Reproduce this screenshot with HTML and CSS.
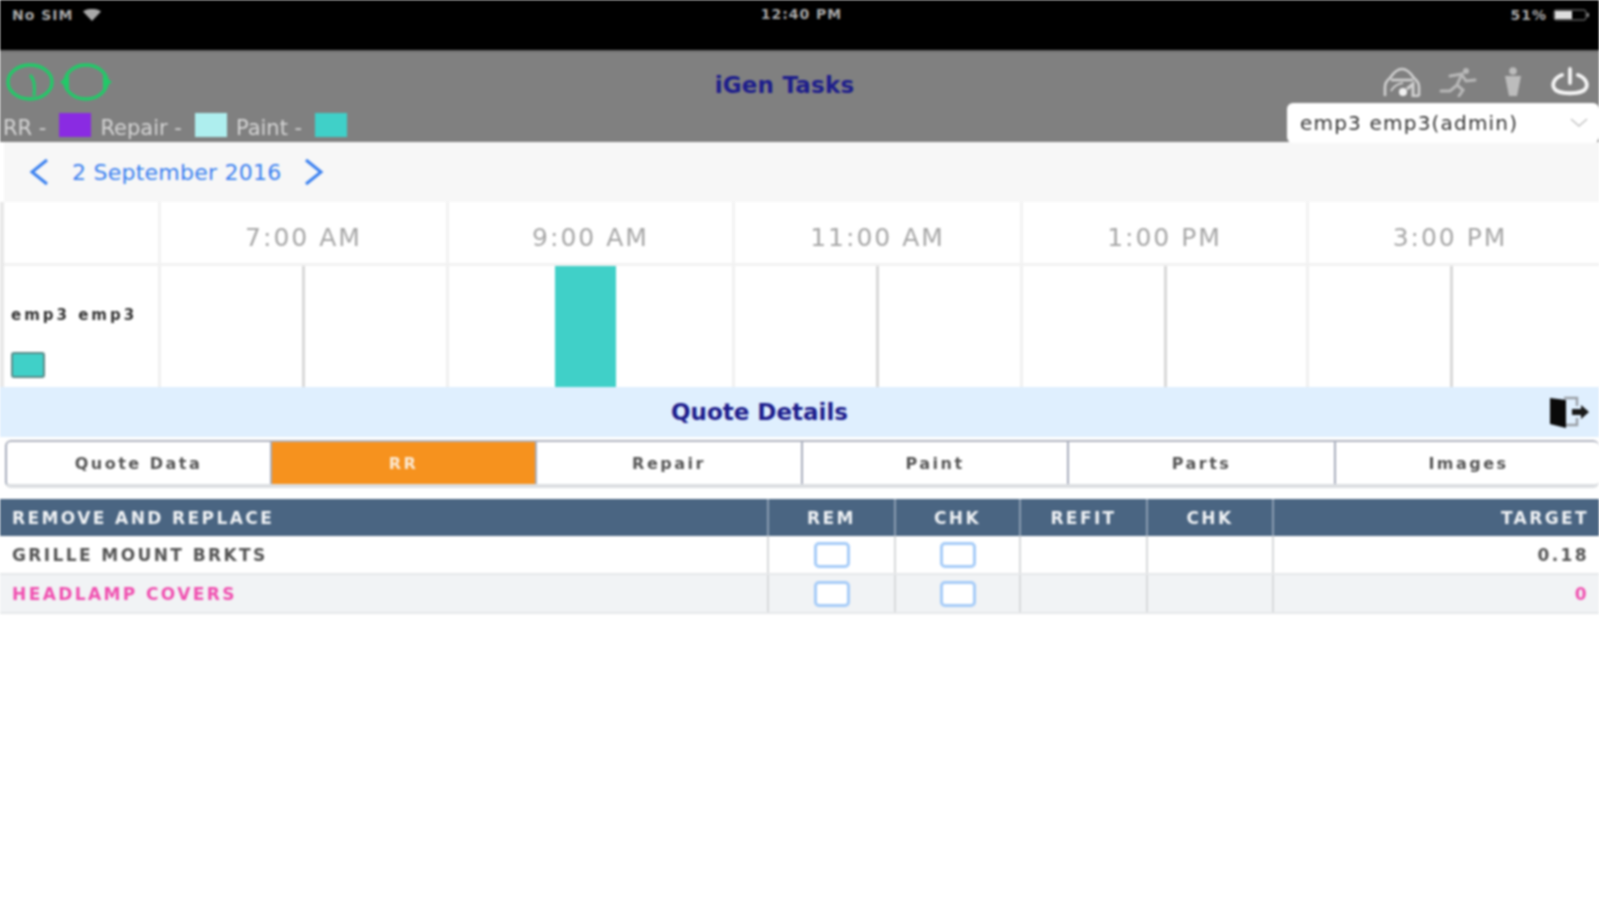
FILE: index.html
```html
<!DOCTYPE html>
<html lang="en">
<head>
    <meta charset="UTF-8">
    <meta name="viewport" content="width=device-width, initial-scale=1.0">
    <title>iGen Tasks</title>
    <link rel="stylesheet" href="styles.css">
</head>
<body>
    <div class="screen">
        <!-- Status bar -->
        <div class="status-bar">
            <div class="status-side">
                <span>No SIM</span>
                <svg class="wifi" width="18" height="12" viewBox="0 0 18 12"><path d="M0 2.5 C5 -1 13 -1 18 2.5 L9 12 Z" fill="#a8a8a8"/></svg>
            </div>
            <span class="status-time">12:40 PM</span>
            <div class="status-side right">
                <span>51%</span>
                <svg width="38" height="12" viewBox="0 0 38 12"><rect x="1" y="1" width="32" height="10" rx="2" fill="none" stroke="#888" stroke-width="1"/><rect x="2" y="2" width="17" height="8" fill="#ddd"/><rect x="34" y="4" width="2" height="4" fill="#888"/></svg>
            </div>
        </div>

        <!-- Header -->
        <header class="app-header">
            <div class="header-main">
                <div class="header-icons">
                    <svg width="50" height="40" viewBox="0 0 50 40"><ellipse cx="24" cy="20" rx="22" ry="17" fill="none" stroke="#22c968" stroke-width="3.4"/><path d="M24 13 Q30 18 28 34" fill="none" stroke="#22c968" stroke-width="3"/></svg>
                    <svg width="52" height="40" viewBox="0 0 52 40"><ellipse cx="26" cy="20" rx="21" ry="17" fill="none" stroke="#22c968" stroke-width="3.4"/><path d="M0 20 L9 13 L9 27 Z M52 20 L43 13 L43 27 Z" fill="#22c968"/></svg>
                </div>
                <h1 class="app-title">iGen Tasks</h1>
                <div class="header-actions">
                    <svg width="38" height="30" viewBox="0 0 38 30" fill="none" stroke="#d0d0d0" stroke-width="2.6"><path d="M2 29 V20 Q2 15 7 11 Q13 2 19 2 Q25 2 31 11 Q36 15 36 20 V29"/><path d="M8 13 H30"/><path d="M8 24 Q12 17 20 16" stroke-width="2"/><circle cx="20" cy="25" r="4" fill="#f2f2f2" stroke="none"/><path d="M24 22 L30 17 V29 H36" stroke-width="3"/></svg>
                    <svg class="icon-runner" width="38" height="30" viewBox="0 0 38 30" fill="none" stroke="#b8b8b8" stroke-width="3" stroke-linecap="round"><circle cx="27" cy="4" r="3" fill="#b8b8b8" stroke="none"/><path d="M11 9 L23 7 L18 18 L24 23 L20 29"/><path d="M23 8 L27 14 L36 13"/><path d="M17 19 L11 24 H2"/></svg>
                    <svg class="icon-person" width="22" height="30" viewBox="0 0 22 30" fill="#bcbcbc"><circle cx="11" cy="4" r="3.8"/><path d="M3 9 H19 L17 19 L15 29 H7 L5 19 Z"/></svg>
                    <svg class="icon-power" width="38" height="30" viewBox="0 0 38 30" fill="none" stroke="#f4f4f4" stroke-width="3.8" stroke-linecap="round"><path d="M11 8 C3 11 1 17 3 21 C6 28 32 28 35 21 C37 17 35 11 27 8"/><path d="M19 2 V16"/></svg>
                </div>
            </div>
            <div class="header-sub">
                <div class="legend">
                    <span>RR -</span><i class="swatch swatch-rr"></i>
                    <span>Repair -</span><i class="swatch swatch-repair"></i>
                    <span>Paint -</span><i class="swatch swatch-paint"></i>
                </div>
                <div class="employee-select">
                    <span>emp3 emp3(admin)</span>
                    <svg width="20" height="10" viewBox="0 0 20 10"><path d="M2 1 L10 8 L18 1" fill="none" stroke="#c4c4c4" stroke-width="1.6"/></svg>
                </div>
            </div>
        </header>

        <!-- Date navigation -->
        <div class="date-bar">
            <svg width="22" height="28" viewBox="0 0 22 28"><path d="M19 2 L4 14 L19 26" fill="none" stroke="#3a80f0" stroke-width="3"/></svg>
            <span class="date-label">2 September 2016</span>
            <svg width="22" height="28" viewBox="0 0 22 28"><path d="M3 2 L18 14 L3 26" fill="none" stroke="#3a80f0" stroke-width="3"/></svg>
        </div>

        <!-- Timeline -->
        <div class="timeline">
            <div class="hour-head first"></div>
            <div class="hour-head">7:00 AM</div>
            <div class="hour-head">9:00 AM</div>
            <div class="hour-head">11:00 AM</div>
            <div class="hour-head">1:00 PM</div>
            <div class="hour-head last">3:00 PM</div>

            <div class="emp-cell">
                <span class="emp-name">emp3 emp3</span>
                <i class="emp-swatch"></i>
            </div>
            <div class="hour-cell"></div>
            <div class="hour-cell"><i class="job-bar"></i></div>
            <div class="hour-cell"></div>
            <div class="hour-cell"></div>
            <div class="hour-cell"></div>
        </div>

        <!-- Quote details -->
        <div class="quote-bar">
            <h2>Quote Details</h2>
            <svg class="exit-icon" width="42" height="34" viewBox="0 0 42 34"><path d="M16 3 H29 V11 M29 23 V30 H16" fill="none" stroke="#9a9fa6" stroke-width="2.4"/><path d="M2 3 L18 5 V33 L2 29 Z" fill="#0a0a0a"/><path d="M24 14 H33 V10 L41 17 L33 24 V20 H24 Z" fill="#1a1a1a"/></svg>
        </div>

        <div class="tabs">
            <div class="tab">Quote Data</div>
            <div class="tab active">RR</div>
            <div class="tab">Repair</div>
            <div class="tab">Paint</div>
            <div class="tab">Parts</div>
            <div class="tab">Images</div>
        </div>

        <div class="rr-table">
            <div class="row head">
                <div class="cell name">REMOVE AND REPLACE</div>
                <div class="cell">REM</div>
                <div class="cell">CHK</div>
                <div class="cell">REFIT</div>
                <div class="cell">CHK</div>
                <div class="cell target">TARGET</div>
            </div>
            <div class="row">
                <div class="cell name">GRILLE MOUNT BRKTS</div>
                <div class="cell"><i class="check"></i></div>
                <div class="cell"><i class="check"></i></div>
                <div class="cell"></div>
                <div class="cell"></div>
                <div class="cell target">0.18</div>
            </div>
            <div class="row alt pink">
                <div class="cell name">HEADLAMP COVERS</div>
                <div class="cell"><i class="check"></i></div>
                <div class="cell"><i class="check"></i></div>
                <div class="cell"></div>
                <div class="cell"></div>
                <div class="cell target">0</div>
            </div>
        </div>
    </div>
</body>
</html>
```

FILE: styles.css
```css
html, body {
    margin: 0;
    height: 100%;
    overflow: hidden;
    background-color: white;
}

/* the reference is a soft upscaled shot, so everything gets a small blur */
.screen {
    width: 1599px;
    height: 900px;
    font-family: "DejaVu Sans", sans-serif;
    filter: blur(1px);
}

.status-bar {
    height: 50px;
    box-sizing: border-box;
    padding: 6px 8px 0 12px;
    background-color: black;
    color: #a8a8a8;
    font-size: 14px;
    font-weight: bold;
    letter-spacing: 1px;
    display: grid;
    grid-template-columns: 1fr auto 1fr;
}

.status-side {
    display: flex;
    align-items: center;
    gap: 10px;
    height: 17px;
}

.status-side.right {
    justify-content: flex-end;
    gap: 6px;
}

.status-time {
    height: 17px;
    line-height: 17px;
}

.app-header {
    height: 92px;
    background-color: #808080;
    border-top: 2px solid #6c6c6c;
    box-sizing: border-box;
}

.header-main {
    height: 51px;
    display: grid;
    grid-template-columns: 1fr auto 1fr;
    align-items: end;
    padding: 0 10px 0 6px;
}

.header-icons {
    display: flex;
    gap: 4px;
    margin-bottom: 1px;
}

.app-title {
    margin: 0 0 5px 0;
    padding-right: 26px;
    color: #1d1d8c;
    font-size: 23px;
    font-weight: bold;
    letter-spacing: 0.2px;
}

.header-actions {
    display: flex;
    justify-content: flex-end;
    gap: 18px;
    align-items: center;
    margin-bottom: 6px;
}

.icon-person { margin-left: 7px; }
.icon-power { margin-left: 9px; }

.header-sub {
    height: 39px;
    display: flex;
    justify-content: space-between;
    align-items: flex-end;
}

.legend {
    display: flex;
    align-items: center;
    height: 32px;
    padding-left: 3px;
    color: #d4d4d4;
    font-size: 21px;
}

.legend span {
    padding-top: 3px;
}

.swatch {
    width: 32px;
    height: 24px;
    margin: 0 9px 3px 13px;
}

.swatch-rr { background-color: #8a2be2; }
.swatch-repair { background-color: #aeeeee; }
.swatch-paint { background-color: #40d0c8; }

.employee-select {
    width: 312px;
    height: 40px;
    margin-bottom: -1px;
    padding: 0 10px 0 13px;
    box-sizing: border-box;
    display: flex;
    justify-content: space-between;
    align-items: center;
    background-color: white;
    border-radius: 6px;
    color: #333;
    font-size: 20px;
    letter-spacing: 1.2px;
}

.date-bar {
    height: 60px;
    margin-left: 4px;
    padding-left: 24px;
    display: flex;
    align-items: center;
    gap: 21px;
    background-color: #f7f7f7;
    color: #3a80f0;
    font-size: 22px;
    letter-spacing: 0.25px;
}

.date-label {
    width: 210px;
    margin-left: 1px;
    white-space: nowrap;
}

.timeline {
    display: grid;
    grid-template-columns: 154px 288px 286px 288px 286px 293px;
    grid-template-rows: 64px 121px;
    border-left: 4px solid #e8e8e8;
    width: 1595px;
}

.hour-head {
    display: flex;
    justify-content: center;
    align-items: center;
    padding-top: 10px;
    box-sizing: border-box;
    color: #a6a6a6;
    font-size: 25px;
    letter-spacing: 2px;
    border-left: 3px solid #f2f2f2;
    border-bottom: 3px solid #f2f2f2;
}

.hour-head.first {
    border-left: none;
}

.hour-head.last {
    padding-right: 8px;
}

.emp-cell {
    padding: 40px 0 0 7px;
    display: flex;
    flex-direction: column;
    gap: 28px;
    box-sizing: border-box;
}

.emp-name {
    font-size: 15px;
    font-weight: bold;
    letter-spacing: 3px;
    color: #333;
}

.emp-swatch {
    width: 30px;
    height: 22px;
    background-color: #40d0c8;
    border: 2px solid #5a8a88;
    border-radius: 3px;
}

.hour-cell {
    position: relative;
    border-left: 3px solid #f0f0f0;
}

/* half hour line in the middle of each column */
.hour-cell::after {
    content: "";
    position: absolute;
    top: 0;
    bottom: 0;
    left: 141px;
    width: 3px;
    background-color: #d8d8d8;
}

.job-bar {
    position: absolute;
    top: 0;
    bottom: 0;
    left: 106px;
    width: 61px;
    background-color: #40d0c8;
    z-index: 1;
}

.quote-bar {
    height: 50px;
    position: relative;
    display: flex;
    justify-content: center;
    align-items: center;
    background-color: #dfeffe;
}

.quote-bar h2 {
    margin: 0 80px 0 0;
    color: #1d1d8c;
    font-size: 23px;
}

.exit-icon {
    position: absolute;
    right: 9px;
    top: 8px;
}

.tabs {
    height: 48px;
    margin: 3px 0 0 5px;
    display: grid;
    grid-template-columns: 263px 265px 266px 266px 267px 267px;
    box-sizing: border-box;
    border-top: 2px solid #b0b4c0;
    border-bottom: 4px solid #dcdfe2;
    border-left: 2px solid #a8aebc;
    border-radius: 6px;
}

.tab {
    display: flex;
    justify-content: center;
    align-items: center;
    color: #555;
    font-size: 16px;
    font-weight: bold;
    letter-spacing: 2.5px;
    border-left: 2px solid #a8aebc;
}

.tab:first-child {
    border-left: none;
}

.tab.active {
    background-color: #f6921e;
    color: #fbe8d0;
}

.rr-table {
    margin-top: 11px;
}

.row {
    display: grid;
    grid-template-columns: 767px 127px 125px 127px 126px 327px;
    height: 39px;
    font-size: 17px;
    font-weight: bold;
    letter-spacing: 2.4px;
    color: #555;
    border-bottom: 2px solid #e6e8ea;
    box-sizing: border-box;
}

.row.head {
    height: 37px;
    background-color: #4a6582;
    color: #eef1f4;
    border-bottom: none;
}

.row.alt {
    background-color: #f1f3f5;
}

.row.pink {
    color: #f050b0;
}

.cell {
    display: flex;
    justify-content: center;
    align-items: center;
    border-left: 2px solid #d8dadc;
}

.row.head .cell {
    border-left-color: #8a9cb0;
}

.cell.name {
    justify-content: flex-start;
    padding-left: 12px;
    border-left: none;
}

.cell.target {
    justify-content: flex-end;
    padding-right: 10px;
}

.check {
    width: 30px;
    height: 20px;
    background-color: white;
    border: 3px solid #a6ccf8;
    border-radius: 5px;
}
```
